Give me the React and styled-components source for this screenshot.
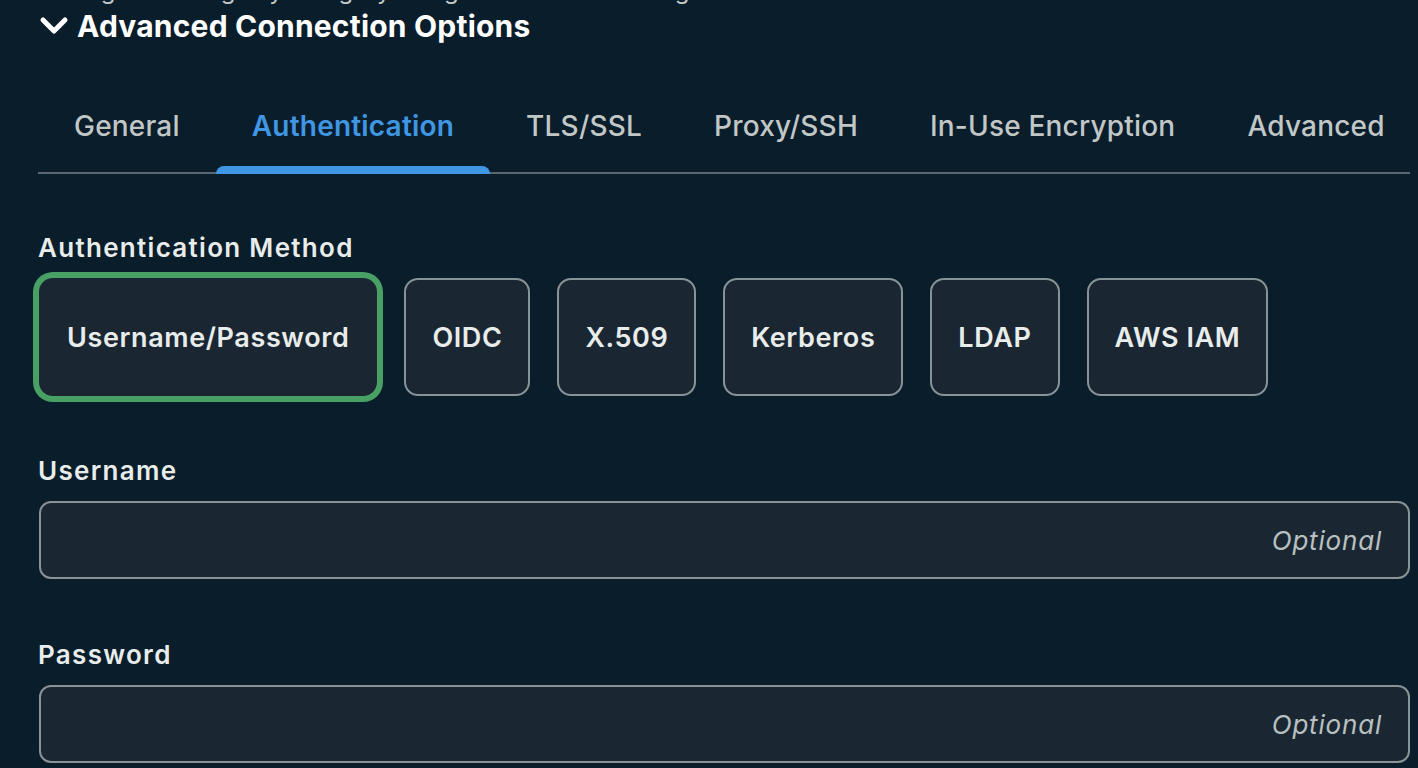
import styled, { createGlobalStyle } from "styled-components";

const GlobalStyle = createGlobalStyle`
  html, body {
    margin: 0;
    padding: 0;
    background: #0a1d2b;
    overflow: hidden;
  }
  body {
    font-family: Inter, "Noto Sans", sans-serif;
    color: #e8edeb;
  }
`;

const TABS = [
  "General",
  "Authentication",
  "TLS/SSL",
  "Proxy/SSH",
  "In-Use Encryption",
  "Advanced",
];

const METHODS = [
  "Username/Password",
  "OIDC",
  "X.509",
  "Kerberos",
  "LDAP",
  "AWS IAM",
];

function Chevron() {
  return (
    <svg width="30" height="22" viewBox="0 0 30 22" aria-hidden="true">
      <polyline
        points="4,5 15,16 26,5"
        fill="none"
        stroke="#ffffff"
        strokeWidth="5"
        strokeLinecap="round"
        strokeLinejoin="round"
      />
    </svg>
  );
}

function Field({ label }) {
  return (
    <FieldGroup>
      <Label>{label}</Label>
      <InputBox>
        <Input placeholder="Optional" />
      </InputBox>
    </FieldGroup>
  );
}

export default function App() {
  const activeTab = "Authentication";
  const activeMethod = "Username/Password";

  return (
    <Page>
      <GlobalStyle />
      <ClippedLine>
        <span>Configure settings by category using the tabs and settings below</span>
      </ClippedLine>
      <Header>
        <Chevron />
        <Title>Advanced Connection Options</Title>
      </Header>

      <TabList>
        {TABS.map((tab) => (
          <Tab key={tab} $active={tab === activeTab}>
            {tab}
          </Tab>
        ))}
      </TabList>

      <SectionLabel>Authentication Method</SectionLabel>
      <MethodRow>
        {METHODS.map((m) => (
          <MethodButton key={m} $selected={m === activeMethod}>
            {m}
          </MethodButton>
        ))}
      </MethodRow>

      <Field label="Username" />
      <Field label="Password" />
    </Page>
  );
}

const Page = styled.div`
  display: flex;
  flex-direction: column;
  padding: 0 8px 0 38px;
  height: 768px;
  box-sizing: border-box;
`;

const ClippedLine = styled.div`
  height: 6px;
  overflow: hidden;
  display: flex;
  align-items: flex-end;
  padding-left: 2px;

  span {
    font-size: 24px;
    line-height: 30px;
    color: #c1c7c6;
    white-space: nowrap;
  }
`;

const Header = styled.div`
  display: flex;
  align-items: center;
  gap: 8px;
  margin-top: 1px;
  height: 38px;
  padding-left: 1px;
`;

const Title = styled.h2`
  margin: 0;
  font-size: 30px;
  font-weight: 700;
  line-height: 38px;
  color: #ffffff;
  letter-spacing: 0.2px;
`;

const TabList = styled.div`
  display: flex;
  margin-top: 64px;
  border-bottom: 2px solid #5a6770;
`;

const Tab = styled.div`
  position: relative;
  padding: 0 36px 29px;
  font-size: 28px;
  font-weight: ${({ $active }) => ($active ? 600 : 500)};
  line-height: 34px;
  letter-spacing: 0.2px;
  color: ${({ $active }) => ($active ? "#3f97e3" : "#c1c7c6")};
  white-space: nowrap;

  &::after {
    content: "";
    display: ${({ $active }) => ($active ? "block" : "none")};
    position: absolute;
    left: 0;
    right: 0;
    bottom: -2px;
    height: 8px;
    border-radius: 8px 8px 0 0;
    background: #3f97e3;
  }
`;

const SectionLabel = styled.div`
  margin-top: 58px;
  font-size: 26px;
  font-weight: 600;
  line-height: 32px;
  letter-spacing: 1.3px;
  color: #e8edeb;
`;

const MethodRow = styled.div`
  display: flex;
  gap: 27px;
  margin-top: 14px;
  padding-left: 1px;
`;

const MethodButton = styled.div`
  display: flex;
  align-items: center;
  justify-content: center;
  height: 118px;
  box-sizing: border-box;
  padding: 0 26px;
  border-radius: 14px;
  border: 2px solid ${({ $selected }) => ($selected ? "#1a2733" : "#889397")};
  box-shadow: ${({ $selected }) => ($selected ? "0 0 0 6px #48a064" : "none")};
  background: #1a2733;
  font-size: 27px;
  font-weight: 600;
  letter-spacing: 0.6px;
  color: #e8edeb;
  white-space: nowrap;
`;

const FieldGroup = styled.div`
  display: flex;
  flex-direction: column;
  margin-top: 59px;

  & + & {
    margin-top: 60px;
  }
`;

const Label = styled.label`
  font-size: 26px;
  font-weight: 600;
  line-height: 32px;
  letter-spacing: 1.3px;
  color: #e8edeb;
`;

const InputBox = styled.div`
  margin-top: 14px;
  margin-left: 1px;
  height: 78px;
  box-sizing: border-box;
  border: 2px solid #889397;
  border-radius: 12px;
  background: #1a2733;
  display: flex;
  align-items: center;
`;

const Input = styled.input`
  flex: 1;
  height: 100%;
  box-sizing: border-box;
  padding: 0 26px;
  border: none;
  outline: none;
  background: transparent;
  font-family: Inter, "Noto Sans", sans-serif;
  font-size: 26px;
  letter-spacing: 0.8px;
  color: #e8edeb;
  text-align: right;

  &::placeholder {
    color: #b8c0c1;
    font-style: italic;
    font-weight: 400;
  }
`;
